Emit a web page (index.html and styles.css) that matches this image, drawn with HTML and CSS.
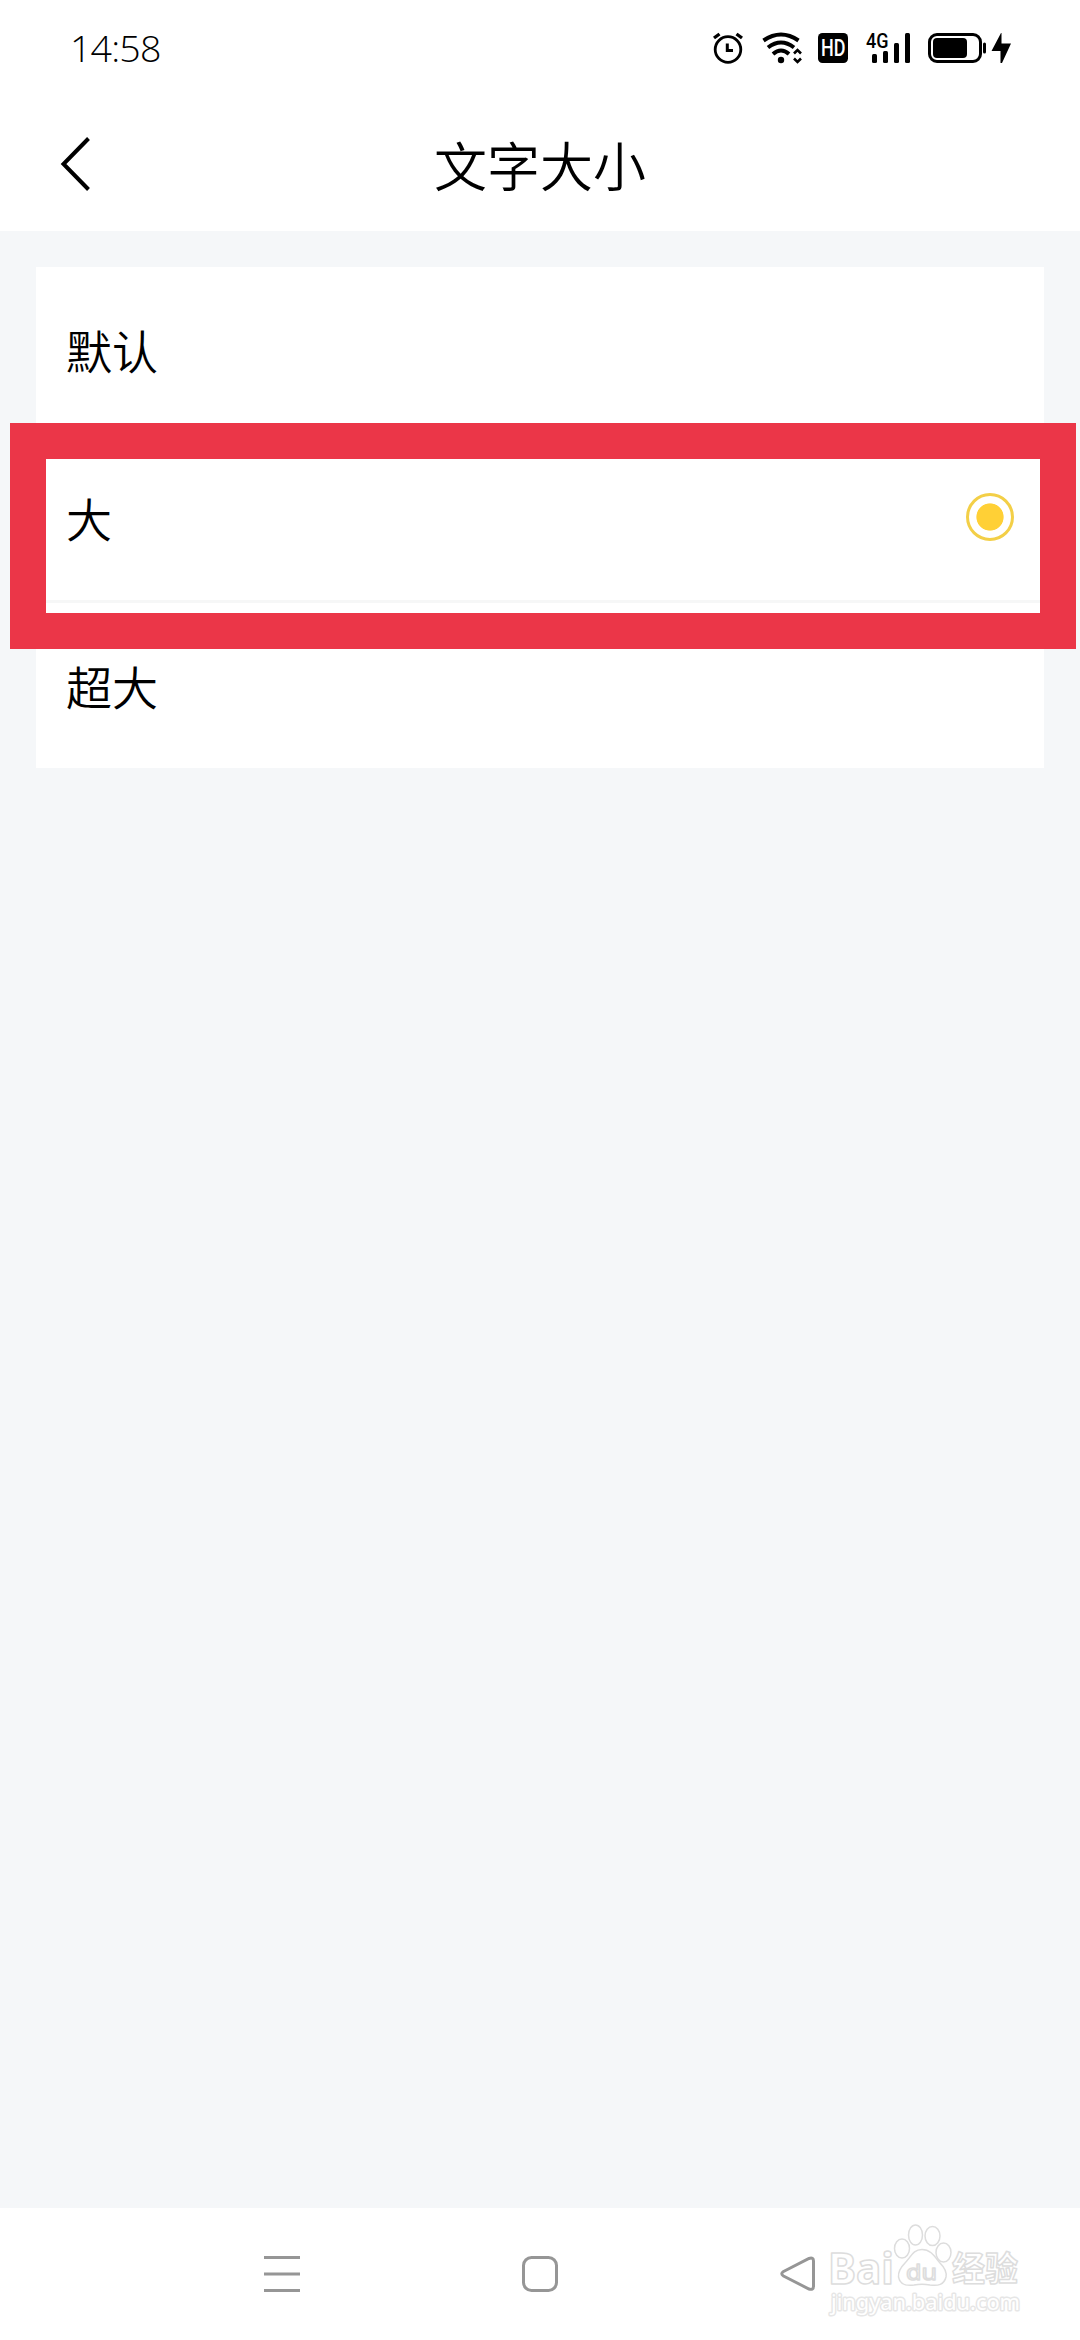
FILE: index.html
```html
<!DOCTYPE html>
<html lang="zh-CN">
<head>
<meta charset="utf-8">
<title>文字大小</title>
<link rel="stylesheet" href="styles.css">
</head>
<body>
<div class="screen">
  <div class="status">
    <span class="time">14:58</span>
    <svg class="status-icons" width="320" height="60" viewBox="700 20 320 60">
      <g fill="none" stroke="#000">
        <circle cx="728" cy="49.5" r="12.8" stroke-width="2.8"/>
        <path d="M727.3 43.500V50.500H733" stroke-width="3"/>
        <path d="M714 38L719.500 34M742 38L736.500 34" stroke-width="3.400"/>
        <path d="M763.500 40.500Q781 28.500 798.500 40.500" stroke-width="4"/>
        <path d="M768 47.500Q781 37.500 794 47.500" stroke-width="4"/>
        <path d="M773 54Q781 47 789 54" stroke-width="4"/>
        <path d="M794 53.500L797.500 50L801 53.500M794 58.500L797.500 62L801 58.500" stroke-width="2.600"/>
        <rect x="929.500" y="34.500" width="51" height="27" rx="7.500" stroke-width="3"/>
      </g>
      <circle cx="781" cy="60" r="3.200"/>
      <rect x="818" y="33" width="30" height="30" rx="4.500"/>
      <text class="hd" x="821" y="56" textLength="24.500" lengthAdjust="spacingAndGlyphs">HD</text>
      <text class="net" x="866" y="47.500" textLength="22.500" lengthAdjust="spacingAndGlyphs">4G</text>
      <rect x="872" y="54" width="5" height="9" rx="1.500"/>
      <rect x="883" y="51" width="5" height="12" rx="1.500"/>
      <rect x="894" y="43" width="5" height="20" rx="1.500"/>
      <rect x="905" y="33" width="5" height="30" rx="1.500"/>
      <rect x="933" y="38" width="34" height="20" rx="4"/>
      <rect x="983" y="42.500" width="3" height="11" rx="1.500"/>
      <path d="M1001 33L991.500 51H1000.500V63H1002L1011 43.500H1001.500V33Z"/>
    </svg>
  </div>
  <header class="header">
    <svg class="back" width="32" height="56" viewBox="0 0 32 56"><path d="M28.500 2.500L3.500 28L28.500 53.500" fill="none" stroke="#000" stroke-width="4"/></svg>
    <h1 class="title">文字大小</h1>
  </header>
  <main class="content">
    <ul class="options">
      <li class="option">默认</li>
      <li class="option">大<span class="radio"></span></li>
      <li class="option">超大</li>
    </ul>
    <div class="highlight"></div>
  </main>
  <nav class="nav">
    <svg width="36" height="36" viewBox="0 0 36 36"><path d="M0 1.500H36M0 18H36M0 34.500H36" stroke="#969696" stroke-width="3"/></svg>
    <svg width="36" height="36" viewBox="0 0 36 36"><rect x="1.500" y="1.500" width="33" height="33" rx="8" fill="none" stroke="#969696" stroke-width="3"/></svg>
    <svg width="36" height="36" viewBox="0 0 36 36"><path d="M3.500 15.500L29 2.500Q33.500 1 33.500 5V30Q33.500 34.500 29 33L3.500 20Q0 17.800 3.500 15.500Z" fill="none" stroke="#969696" stroke-width="3"/></svg>
  </nav>
  <svg class="watermark" width="210" height="110" viewBox="820 2215 210 110">
    <g class="outline">
      <text class="brand" x="828" y="2284" textLength="66" lengthAdjust="spacingAndGlyphs">Bai</text>
      <text class="brand-cn" x="952" y="2281" textLength="66" lengthAdjust="spacingAndGlyphs">经验</text>
      <text class="url" x="831" y="2310" textLength="189" lengthAdjust="spacingAndGlyphs">jingyan.baidu.com</text>
      <ellipse cx="902" cy="2248.500" rx="7.500" ry="9.500"/>
      <ellipse cx="915.500" cy="2235" rx="7" ry="10"/>
      <ellipse cx="932.500" cy="2236" rx="7.500" ry="9.500"/>
      <ellipse cx="943.500" cy="2252.500" rx="7.500" ry="9.500"/>
      <path d="M922 2249.500C931 2249.500 935 2257 940 2263C945 2268 947 2272 946 2277C944 2285 938 2286 930 2285Q922 2283.500 914 2285C906 2286 900 2285 898.500 2277C898 2271 901 2267 905 2263C911 2257 913 2249.500 922 2249.500Z"/>
      <text class="du" x="906" y="2280" textLength="31" lengthAdjust="spacingAndGlyphs">du</text>
    </g>
  </svg>
</div>
</body>
</html>
```

FILE: styles.css
```css
* { box-sizing: border-box; }

body {
  margin: 0;
  background: #fff;
  color: #000;
  font-family: "Noto Sans CJK SC", sans-serif;
}

.screen {
  position: relative;
  display: flex;
  flex-direction: column;
  width: 1080px;
  height: 2340px;
  overflow: hidden;
}

.status {
  display: flex;
  justify-content: space-between;
  height: 96px;
  padding: 20px 60px 0 70px;
}

.time {
  height: 56px;
  font: 300 37.5px/56px "Open Sans", "Noto Sans", sans-serif;
  letter-spacing: -0.8px;
}

.hd { font: 500 23px Roboto, sans-serif; fill: #fff; }
.net { font: 500 20px Roboto, sans-serif; }

.header {
  display: grid;
  grid-template-columns: 60px 1fr 60px;
  align-items: center;
  height: 135px;
  padding: 0 60px;
}

.title {
  margin: 0;
  font-size: 53px;
  font-weight: 350;
  line-height: 80px;
  text-align: center;
}

.content {
  position: relative;
  flex: 1;
  padding: 36px;
  background: #f5f7f9;
}

.options {
  margin: 0;
  padding: 0;
  list-style: none;
  background: #fff;
}

.option {
  display: flex;
  align-items: center;
  justify-content: space-between;
  height: 168px;
  padding: 0 30px 2px;
  border-bottom: 3px solid #f6f7f7;
  font-size: 46px;
  font-weight: 350;
}

.option:last-child {
  height: 165px;
  border-bottom: 0;
}

.radio {
  width: 48px;
  height: 48px;
  border: 3px solid #f3cf47;
  border-radius: 50%;
  background: radial-gradient(circle, #ffd036 13.2px, #fff 14px);
}

.highlight {
  position: absolute;
  top: 192px;
  left: 10px;
  width: 1066px;
  height: 226px;
  border: 36px solid #eb3648;
}

.nav {
  display: flex;
  align-items: center;
  justify-content: center;
  gap: 222px;
  height: 132px;
}

.watermark {
  position: absolute;
  left: 820px;
  top: 2215px;
}

.outline {
  fill: #fff;
  stroke: #ddd;
  stroke-width: 1.5px;
  stroke-linejoin: round;
}

.brand { font: 700 43px "Noto Sans", sans-serif; }
.brand-cn { font: 700 34px "Noto Sans CJK SC", sans-serif; }
.du { font: 400 22px "Noto Sans", sans-serif; }

.url {
  font: 400 22px "Noto Sans", sans-serif;
  stroke: #e6e6e6;
  stroke-width: 3px;
  paint-order: stroke;
}
```
